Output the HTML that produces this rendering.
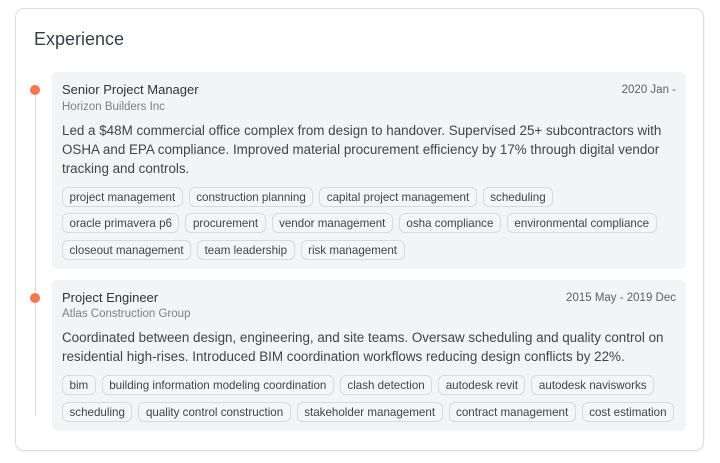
<!DOCTYPE html>
<html><head><meta charset="utf-8"><style>
body{margin:0;width:720px;height:463px;background:#fff;font-family:"Liberation Sans",sans-serif;overflow:hidden;position:relative}
.card{position:absolute;left:15px;top:8px;width:689px;height:443px;border:1px solid #dcdde0;border-radius:9px;box-sizing:border-box;box-shadow:0 1px 2px rgba(0,0,0,.06)}
h2{position:absolute;left:34px;top:29px;margin:0;font-size:18px;font-weight:400;color:#3a3f47}
.line{position:absolute;left:34.5px;top:90px;width:1px;height:326px;background:#d9dbde}
.dot{position:absolute;left:30px;width:10px;height:10px;border-radius:50%;background:#f2764e}
.box{position:absolute;left:52px;width:634px;background:#f3f4f6;border-radius:6px}
.t{position:absolute;left:10px;font-size:13px;color:#30343b}
.c{position:absolute;left:10px;font-size:11.5px;color:#7b8088}
.d{position:absolute;right:10px;font-size:11.5px;color:#5c6169}
.p{position:absolute;left:10px;font-size:13.4px;line-height:19px;color:#3f444c;white-space:nowrap}
.r{position:absolute;left:10px;white-space:nowrap;display:flex;gap:6px}
.g{display:inline-block;height:20px;line-height:19px;padding:0 6.5px;font-size:11.6px;color:#3f444c;border:1px solid #d7d9dd;border-radius:6px;box-sizing:border-box;background:#f4f5f7}
</style></head><body>
<div class="card"></div>
<h2>Experience</h2>
<div class="line"></div>
<div class="dot" style="top:85px"></div>
<div class="dot" style="top:293px"></div>
<div class="box" style="top:72px;height:197px">
<div class="t" style="top:10px">Senior Project Manager</div>
<div class="c" style="top:29px">Horizon Builders Inc</div>
<div class="d" style="top:12px">2020 Jan -</div>
<div class="p" style="top:49px">Led a $48M commercial office complex from design to handover. Supervised 25+ subcontractors with<br>OSHA and EPA compliance. Improved material procurement efficiency by 17% through digital vendor<br>tracking and controls.</div>
<div class="r" style="top:115px"><span class="g">project management</span><span class="g">construction planning</span><span class="g">capital project management</span><span class="g">scheduling</span></div>
<div class="r" style="top:141px"><span class="g">oracle primavera p6</span><span class="g">procurement</span><span class="g">vendor management</span><span class="g">osha compliance</span><span class="g">environmental compliance</span></div>
<div class="r" style="top:168px"><span class="g">closeout management</span><span class="g">team leadership</span><span class="g">risk management</span></div>
</div>
<div class="box" style="top:280px;height:151px">
<div class="t" style="top:10px">Project Engineer</div>
<div class="c" style="top:28px">Atlas Construction Group</div>
<div class="d" style="top:12px">2015 May - 2019 Dec</div>
<div class="p" style="top:48px">Coordinated between design, engineering, and site teams. Oversaw scheduling and quality control on<br>residential high-rises. Introduced BIM coordination workflows reducing design conflicts by 22%.</div>
<div class="r" style="top:95px"><span class="g">bim</span><span class="g">building information modeling coordination</span><span class="g">clash detection</span><span class="g">autodesk revit</span><span class="g">autodesk navisworks</span></div>
<div class="r" style="top:122px"><span class="g">scheduling</span><span class="g">quality control construction</span><span class="g">stakeholder management</span><span class="g">contract management</span><span class="g">cost estimation</span></div>
</div>
</body></html>
